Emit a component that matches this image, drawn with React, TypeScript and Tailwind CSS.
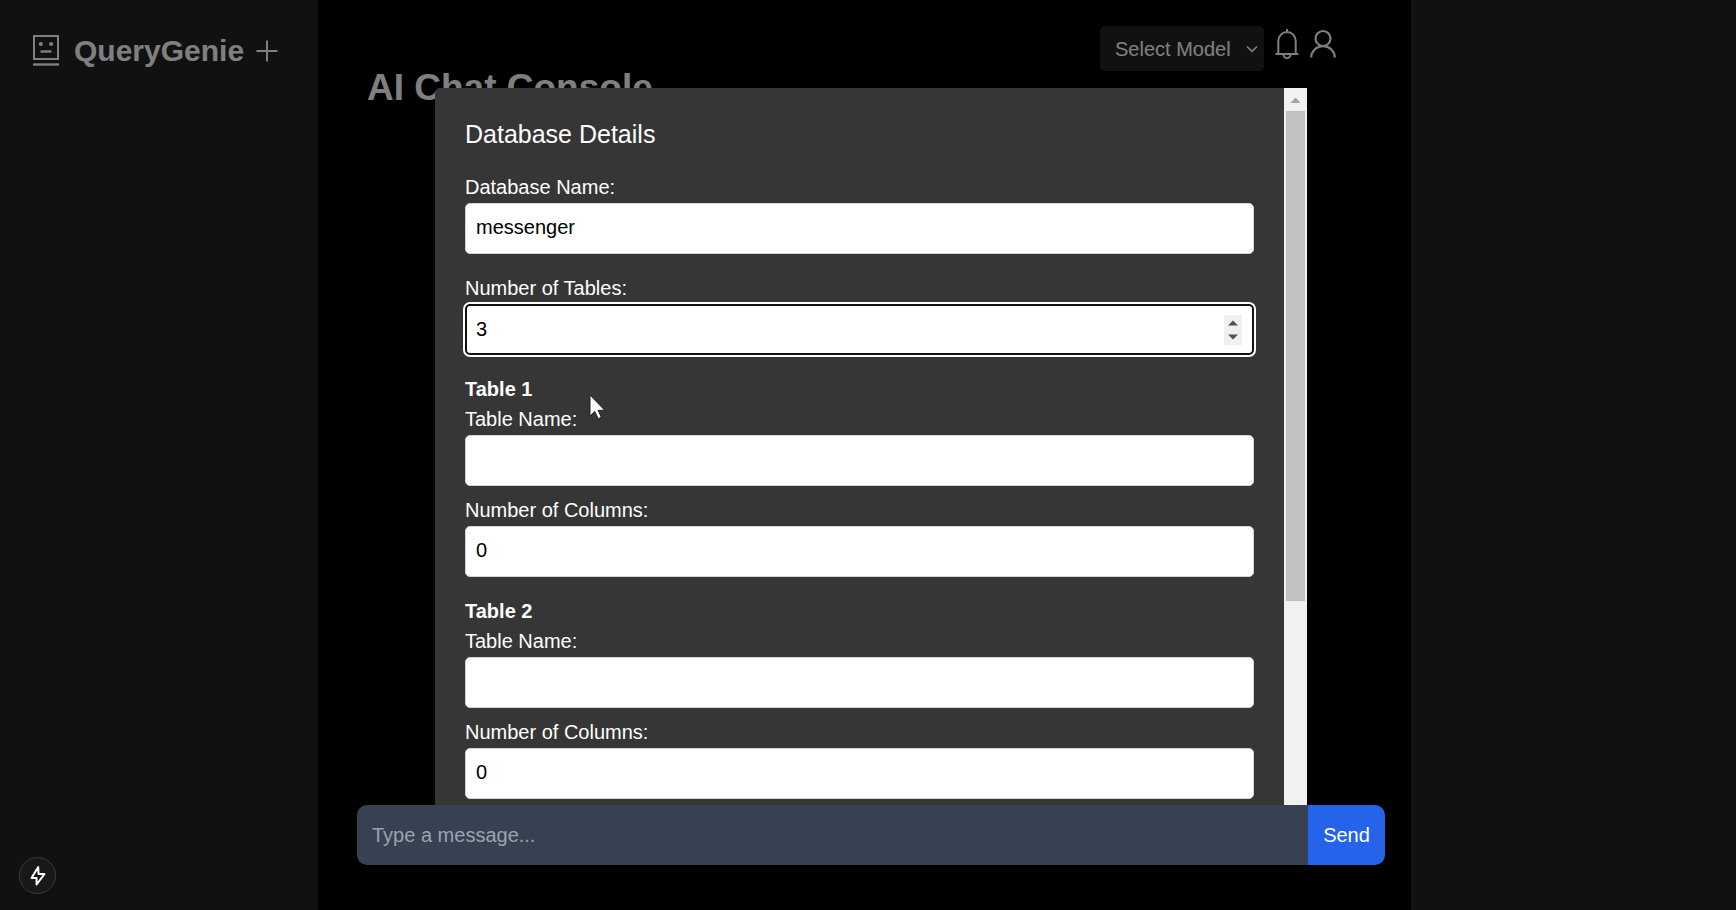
import { useState } from "react";

const inputClass =
  "block h-[51px] w-full rounded-[5px] border border-[#d1d5db] bg-white px-2.5 pb-0.5 text-xl text-black";

type FieldProps = {
  id: string;
  label: string;
  value: string | number;
  onChange: (value: string) => void;
  numeric?: boolean;
};

function Field({ id, label, value, onChange, numeric }: FieldProps) {
  return (
    <div>
      <label htmlFor={id} className="block pb-0.5 text-xl leading-7">
        {label}
      </label>
      <input
        id={id}
        type="text"
        inputMode={numeric ? "numeric" : "text"}
        value={value}
        onChange={(e) => onChange(e.target.value)}
        className={inputClass}
      />
    </div>
  );
}

function RobotIcon() {
  return (
    <svg width="32" height="36" viewBox="0 0 32 36" fill="none" stroke="currentColor" strokeWidth="2" aria-hidden="true">
      <path d="M4 3h24v23H4z" />
      <path d="M3 31.5h26" strokeWidth="2.4" />
      <path d="M10.5 18.5h11" strokeWidth="2.4" />
      <circle cx="10.8" cy="11" r="2.1" fill="currentColor" stroke="none" />
      <circle cx="21.1" cy="11" r="2.1" fill="currentColor" stroke="none" />
    </svg>
  );
}

function BellIcon() {
  return (
    <svg width="30" height="32" viewBox="0 0 30 32" fill="none" stroke="currentColor" strokeWidth="2" aria-hidden="true">
      <path d="M6.3 26V13a8.7 9 0 0 1 17.4 0v13" />
      <path d="M3.5 26h23" />
      <path d="M15 4V1" />
      <path d="M11.5 26.5a3.5 3.8 0 0 0 7 0" />
    </svg>
  );
}

function UserIcon() {
  return (
    <svg width="30" height="32" viewBox="0 0 30 32" fill="none" stroke="currentColor" strokeWidth="2.2" aria-hidden="true">
      <circle cx="15" cy="10.5" r="7.5" />
      <path d="M3.2 29.5a11.8 11.3 0 0 1 23.6 0" />
    </svg>
  );
}

function Scrollbar() {
  return (
    <div className="flex w-[23px] shrink-0 flex-col items-center bg-[#f1f1f1]" aria-hidden="true">
      <svg className="h-[23px] w-[23px] shrink-0" viewBox="0 0 23 23" fill="#a3a3a3">
        <path d="M6.5 15h10l-5-5.5z" />
      </svg>
      <div className="h-[490px] w-[19px] shrink-0 bg-[#c1c1c1]" />
    </div>
  );
}

export default function App() {
  const [dbName, setDbName] = useState("messenger");
  const [count, setCount] = useState("3");
  const [tables, setTables] = useState([
    { name: "", columns: "0" },
    { name: "", columns: "0" },
  ]);
  const update = (index: number, patch: { name?: string; columns?: string }) =>
    setTables(tables.map((t, i) => (i === index ? { ...t, ...patch } : t)));
  const step = (by: number) => setCount(String(Math.max(0, Number(count) + by)));

  return (
    <div className="relative flex h-screen overflow-hidden bg-black font-['Liberation_Sans',Arial,sans-serif] text-xl text-white">
      <aside className="w-[318px] shrink-0 bg-[#222] px-[30px] pt-[33px]">
        <div className="flex items-center">
          <RobotIcon />
          <span className="ml-3 text-[30px] leading-9 font-bold">QueryGenie</span>
          <button type="button" aria-label="New chat" className="ml-2.5">
            <svg width="26" height="26" viewBox="0 0 26 26" stroke="currentColor" strokeWidth="2">
              <path d="M13 2.5v21M2.5 13h21" />
            </svg>
          </button>
        </div>
      </aside>

      <main className="flex min-w-0 flex-1 flex-col pr-[26px] pb-[45px] pl-[39px]">
        <header className="flex items-start justify-end pt-[26px] pr-[47px]">
          <div className="relative">
            <select
              aria-label="Model"
              className="block h-[45px] w-[164px] appearance-none rounded-[5px] bg-[#222] pr-7 pl-[15px] text-xl"
            >
              <option>Select Model</option>
            </select>
            <svg
              className="pointer-events-none absolute top-[19px] right-1.5"
              width="12"
              height="8"
              viewBox="0 0 12 8"
              fill="none"
              stroke="currentColor"
              strokeWidth="1.7"
              aria-hidden="true"
            >
              <path d="M1 1.5l5 4.8 5-4.8" />
            </svg>
          </div>
          <button type="button" aria-label="Notifications" className="mt-0.5 ml-2">
            <BellIcon />
          </button>
          <button type="button" aria-label="Account" className="mt-0.5 ml-1.5">
            <UserIcon />
          </button>
        </header>
        <h1 className="pl-2.5 text-[37px] leading-[34px] font-bold">AI Chat Console</h1>
        <form className="z-20 mt-auto flex h-[60px]" onSubmit={(e) => e.preventDefault()}>
          <input
            type="text"
            aria-label="Message"
            placeholder="Type a message..."
            className="min-w-0 flex-1 rounded-l-[10px] bg-[#374151] px-[15px] text-xl text-white placeholder-[#9ca3af]"
          />
          <button type="submit" className="w-[77px] rounded-r-[10px] bg-[#2563eb] text-xl">
            Send
          </button>
        </form>
      </main>

      <aside className="w-[325px] shrink-0 bg-[#222]" />

      <div className="absolute inset-0 z-10 flex bg-black/50 pt-[88px] pr-[429px] pl-[435px]">
        <section
          role="dialog"
          aria-labelledby="dialog-title"
          className="flex h-[734px] w-full overflow-hidden rounded-tl-[5px] bg-[#363636]"
        >
          <div className="min-w-0 flex-1 p-[30px]">
            <h2 id="dialog-title" className="mb-[23px] text-[25px] leading-8">
              Database Details
            </h2>
            <div className="flex flex-col gap-5">
              <Field id="db-name" label="Database Name:" value={dbName} onChange={setDbName} />
              <div>
                <label htmlFor="table-count" className="block pb-0.5 text-xl leading-7">
                  Number of Tables:
                </label>
                <div className="flex h-[51px] items-center rounded-[5px] border-2 border-[#101010] bg-white pr-2.5 pl-[9px] outline-2 outline-white">
                  <input
                    id="table-count"
                    type="text"
                    inputMode="numeric"
                    value={count}
                    onChange={(e) => setCount(e.target.value)}
                    className="min-w-0 flex-1 pb-0.5 text-xl text-black outline-none"
                  />
                  <div className="flex h-[30px] w-[18px] flex-col bg-[#f0f0f0] text-[#505050]">
                    <button type="button" aria-label="Increase" onClick={() => step(1)} className="flex-1">
                      <svg width="18" height="15" viewBox="0 0 18 15" fill="currentColor">
                        <path d="M4 10.5h10l-5-5z" />
                      </svg>
                    </button>
                    <button type="button" aria-label="Decrease" onClick={() => step(-1)} className="flex-1">
                      <svg width="18" height="15" viewBox="0 0 18 15" fill="currentColor">
                        <path d="M4 4.5h10l-5 5z" />
                      </svg>
                    </button>
                  </div>
                </div>
              </div>
              {tables.map((table, i) => (
                <div key={i}>
                  <h3 className="pb-0.5 text-xl leading-7 font-bold">Table {i + 1}</h3>
                  <div className="flex flex-col gap-2.5">
                    <Field
                      id={`name-${i}`}
                      label="Table Name:"
                      value={table.name}
                      onChange={(name) => update(i, { name })}
                    />
                    <Field
                      id={`columns-${i}`}
                      label="Number of Columns:"
                      value={table.columns}
                      onChange={(columns) => update(i, { columns })}
                      numeric
                    />
                  </div>
                </div>
              ))}
            </div>
          </div>
          <Scrollbar />
        </section>
      </div>

      <button
        type="button"
        aria-label="Developer tools"
        className="absolute bottom-4 left-[19px] z-20 flex size-[37px] items-center justify-center rounded-full border border-[#3a3a3a] bg-[#18181b]"
      >
        <svg width="20" height="22" viewBox="0 0 20 22" fill="none" stroke="currentColor" strokeWidth="2">
          <path d="M10.2 2L3.5 13h5.1v6.5L16.5 9h-6z" strokeLinejoin="round" />
        </svg>
      </button>

      <svg
        className="pointer-events-none absolute top-[394px] left-[589px] z-30"
        width="18"
        height="26"
        viewBox="0 0 18 26"
        aria-hidden="true"
      >
        <path d="M1 1v21l4.8-4.5 3.3 7.2 3.2-1.5-3.2-6.9h6.6z" fill="#fff" stroke="#222" />
      </svg>
    </div>
  );
}
